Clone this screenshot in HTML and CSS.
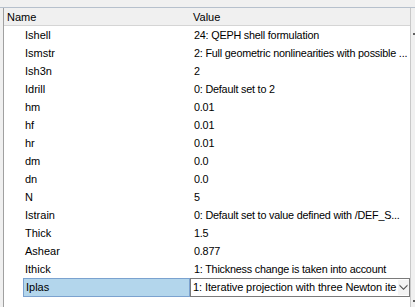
FILE: index.html
```html
<!DOCTYPE html>
<html lang="en">
<head>
    <meta charset="UTF-8">
    <title>Properties</title>
    <link rel="stylesheet" href="styles.css">
</head>
<body>
    <div class="top-strip"></div>
    <div class="panel">
        <div class="grid">
            <div class="head">
                <div class="col-name">Name</div>
                <div class="col-value">Value</div>
            </div>
            <div class="row"><div class="name">Ishell</div><div class="value">24: QEPH shell formulation</div></div>
            <div class="row"><div class="name">Ismstr</div><div class="value">2: Full geometric nonlinearities with possible ...</div></div>
            <div class="row"><div class="name">Ish3n</div><div class="value">2</div></div>
            <div class="row"><div class="name">Idrill</div><div class="value">0: Default set to 2</div></div>
            <div class="row"><div class="name">hm</div><div class="value">0.01</div></div>
            <div class="row"><div class="name">hf</div><div class="value">0.01</div></div>
            <div class="row"><div class="name">hr</div><div class="value">0.01</div></div>
            <div class="row"><div class="name">dm</div><div class="value">0.0</div></div>
            <div class="row"><div class="name">dn</div><div class="value">0.0</div></div>
            <div class="row"><div class="name">N</div><div class="value">5</div></div>
            <div class="row"><div class="name">Istrain</div><div class="value">0: Default set to value defined with /DEF_S...</div></div>
            <div class="row"><div class="name">Thick</div><div class="value">1.5</div></div>
            <div class="row"><div class="name">Ashear</div><div class="value">0.877</div></div>
            <div class="row"><div class="name">Ithick</div><div class="value">1: Thickness change is taken into account</div></div>
            <div class="row">
                <div class="name selected">Iplas</div>
                <div class="combo">
                    <span class="combo-text">1: Iterative projection with three Newton ite</span>
                    <span class="combo-arrow">
                        <svg width="9" height="6" viewBox="0 0 9 6"><path d="M0.5 0.5 L4.5 4.5 L8.5 0.5 L8.5 2 L4.5 6 L0.5 2 Z" fill="#4d4d4d"/></svg>
                    </span>
                </div>
            </div>
        </div>
        <div class="scrollbar">
            <span class="tick tick-top"></span>
            <span class="tick tick-bottom"></span>
        </div>
    </div>
</body>
</html>
```

FILE: styles.css
```css
body {
    margin: 0;
    font-family: "Liberation Sans", Arial, sans-serif;
    font-size: 11px;
    color: #000;
    background-color: #f0f0f0;
    overflow: hidden;
}

.top-strip {
    height: 8px;
    box-sizing: border-box;
    border-top: 5px solid #f0f0f0;
    border-bottom: 1px solid #b6c0cc;
}

.panel {
    display: flex;
    height: 299px;
    padding-left: 3px;
}

.grid {
    width: 407px;
    border-left: 1px solid #a0a0a0;
    border-right: 1px solid #c8c8c8;
    background: white;
}

.head {
    display: flex;
    height: 17px;
    align-items: center;
    background-color: #f0f0f0;
    border-bottom: 1px solid #d5d5d5;
}

.col-name {
    width: 183px;
    padding-left: 3px;
}

.col-value {
    padding-left: 3px;
}

.row {
    display: flex;
    height: 18px;
    align-items: center;
}

.name {
    flex-shrink: 0;
    width: 165px;
    padding-left: 21px;
    white-space: nowrap;
}

.value {
    flex: 1;
    min-width: 0;
    padding-left: 4px;
    white-space: nowrap;
    overflow: hidden;
    font-size: 10.8px;
    letter-spacing: -0.2px;
}

.name.selected {
    width: 163px;
    height: 17px;
    margin-left: 19px;
    padding-left: 2px;
    display: flex;
    align-items: center;
    background-color: #b3d6ec;
    border: 1px solid #7ba2cf;
}

.combo {
    flex: 1;
    min-width: 0;
    height: 17px;
    display: flex;
    align-items: center;
    border: 1px solid #7a7a7a;
    font-size: 11px;
}

.combo-text {
    flex: 1;
    min-width: 0;
    padding-left: 2px;
    white-space: nowrap;
    overflow: hidden;
    letter-spacing: -0.1px;
}

.combo-arrow {
    width: 11px;
    height: 15px;
    display: flex;
    align-items: center;
    justify-content: center;
    background: #f4f4f4;
}

.scrollbar {
    width: 4px;
    position: relative;
}

.tick {
    position: absolute;
    right: 0;
    width: 2px;
    height: 2px;
    background: #606060;
}

.tick-top {
    top: 25px;
}

.tick-bottom {
    top: 292px;
}
```
